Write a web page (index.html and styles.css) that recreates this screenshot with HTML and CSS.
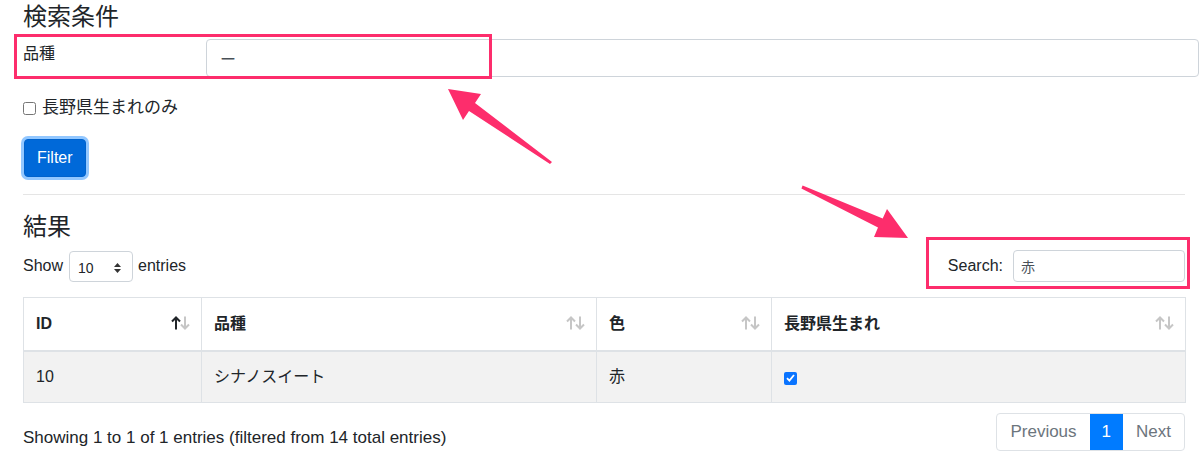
FILE: index.html
```html
<!DOCTYPE html>
<html lang="ja">
<head>
    <meta charset="UTF-8">
    <meta name="viewport" content="width=device-width, initial-scale=1.0">
    <link rel="stylesheet" href="styles.css">
    <title>検索</title>
</head>
<body>
    <div class="page">
        <h3 class="section-title">検索条件</h3>

        <form class="filter-form">
            <div class="form-row">
                <label class="row-label" for="kind">品種</label>
                <input class="text-input" id="kind" type="text" value="ー">
            </div>
            <label class="check-row">
                <input type="checkbox" class="check-box">
                <span>長野県生まれのみ</span>
            </label>
            <button type="button" class="btn-filter">Filter</button>
        </form>

        <hr class="divider">

        <h3 class="section-title result-title">結果</h3>

        <div class="table-controls">
            <div class="length-ctl">
                <span>Show</span>
                <div class="fake-select">
                    <span>10</span>
                    <svg width="9" height="12" viewBox="0 0 9 12"><path d="M4.5 1 L8 5 H1 Z M4.5 11 L8 7 H1 Z" fill="#333"/></svg>
                </div>
                <span>entries</span>
            </div>
            <div class="search-ctl">
                <span>Search:</span>
                <input class="search-input" type="text" value="赤">
            </div>
        </div>

        <table class="result-table">
            <colgroup>
                <col style="width: 178px">
                <col style="width: 395px">
                <col style="width: 175px">
                <col style="width: 414px">
            </colgroup>
            <thead>
                <tr>
                    <th><div class="th-inner"><span>ID</span>
                        <svg class="sort" width="19" height="14" viewBox="0 0 19 14"><path d="M5 13.5 V1.5 M1 5.5 L5 1.5 L9 5.5" class="up on"/><path d="M14 0.5 V12.5 M10 8.5 L14 12.5 L18 8.5" class="down"/></svg>
                    </div></th>
                    <th><div class="th-inner"><span>品種</span>
                        <svg class="sort" width="19" height="14" viewBox="0 0 19 14"><path d="M5 13.5 V1.5 M1 5.5 L5 1.5 L9 5.5" class="up"/><path d="M14 0.5 V12.5 M10 8.5 L14 12.5 L18 8.5" class="down"/></svg>
                    </div></th>
                    <th><div class="th-inner"><span>色</span>
                        <svg class="sort" width="19" height="14" viewBox="0 0 19 14"><path d="M5 13.5 V1.5 M1 5.5 L5 1.5 L9 5.5" class="up"/><path d="M14 0.5 V12.5 M10 8.5 L14 12.5 L18 8.5" class="down"/></svg>
                    </div></th>
                    <th><div class="th-inner"><span>長野県生まれ</span>
                        <svg class="sort" width="19" height="14" viewBox="0 0 19 14"><path d="M5 13.5 V1.5 M1 5.5 L5 1.5 L9 5.5" class="up"/><path d="M14 0.5 V12.5 M10 8.5 L14 12.5 L18 8.5" class="down"/></svg>
                    </div></th>
                </tr>
            </thead>
            <tbody>
                <tr>
                    <td>10</td>
                    <td>シナノスイート</td>
                    <td>赤</td>
                    <td><span class="tick"><svg width="9" height="8" viewBox="0 0 9 8"><path d="M1 4.2 L3.4 6.6 L8 1" fill="none" stroke="#fff" stroke-width="1.8"/></svg></span></td>
                </tr>
            </tbody>
        </table>

        <div class="table-footer">
            <div class="info">Showing 1 to 1 of 1 entries (filtered from 14 total entries)</div>
            <div class="pager">
                <a class="page-link">Previous</a>
                <a class="page-link active">1</a>
                <a class="page-link">Next</a>
            </div>
        </div>
    </div>

    <!-- annotation marks drawn over the screenshot -->
    <svg class="annotations" width="1200" height="469" viewBox="0 0 1200 469">
        <rect x="15.5" y="35.5" width="475" height="42" fill="none" stroke="#fd2d6c" stroke-width="3"/>
        <rect x="927.5" y="238.5" width="261" height="49" fill="none" stroke="#fd2d6c" stroke-width="3"/>
        <polygon points="448,89 481,94 475,103 552,162 550,164 469,111 463,120" fill="#fd2d6c"/>
        <polygon points="908,238 874,237 878,227.5 801.4,188.4 802.6,185.6 882.7,218.5 887,209" fill="#fd2d6c"/>
    </svg>
</body>
</html>
```

FILE: styles.css
```css
body {
    margin: 0;
    font-family: "Liberation Sans", "Noto Sans CJK JP", sans-serif;
    font-size: 16px;
    color: #212529;
    background-color: #fff;
}

.page {
    padding: 0 15px 0 23px;
}

.section-title {
    margin: 0;
    font-size: 24px;
    font-weight: normal;
    line-height: 34px;
}

.filter-form {
    display: flex;
    flex-direction: column;
    align-items: flex-start;
}

.form-row {
    display: flex;
    align-items: flex-start;
    margin-top: 5px;
    margin-right: -14px;
    align-self: stretch;
}

.row-label {
    width: 183px;
    padding-top: 3px;
    line-height: 24px;
}

.text-input {
    flex: 1;
    height: 38px;
    box-sizing: border-box;
    border: 1px solid #ced4da;
    border-radius: 4px;
    padding: 0 13px;
    font: inherit;
    color: #495057;
}

.check-row {
    display: flex;
    align-items: center;
    gap: 6px;
    margin-top: 19px;
    line-height: 24px;
    font-size: 17px;
}

.check-box {
    margin: 0;
    width: 13px;
    height: 13px;
}

.btn-filter {
    margin: 19px 0 0 1px;
    height: 38px;
    padding: 0 12px;
    font: inherit;
    color: #fff;
    background-color: #0069d9;
    border: 1px solid #0062cc;
    border-radius: 4px;
    box-shadow: 0 0 0 3px rgba(38, 143, 255, 0.5);
}

.divider {
    margin: 17px 0 0;
    border: 0;
    border-top: 1px solid #e5e5e5;
}

.result-title {
    margin-top: 15px;
}

.table-controls {
    display: flex;
    justify-content: space-between;
    align-items: center;
    margin-top: 6px;
    height: 32px;
}

.length-ctl,
.search-ctl {
    display: flex;
    align-items: center;
}

.fake-select {
    display: flex;
    align-items: center;
    justify-content: space-between;
    box-sizing: border-box;
    width: 64px;
    height: 31px;
    margin: 1px 5px 0 6px;
    padding: 2px 10px 0 8px;
    border: 1px solid #ced4da;
    border-radius: 4px;
    font-size: 14px;
}

.search-ctl span {
    margin-right: 10px;
}

.search-input {
    width: 172px;
    height: 32px;
    box-sizing: border-box;
    border: 1px solid #ced4da;
    border-radius: 4px;
    padding: 0 7px;
    font: inherit;
    font-size: 14px;
    color: #495057;
}

.result-table {
    width: 100%;
    margin-top: 15px;
    border-collapse: collapse;
    table-layout: fixed;
}

.result-table th,
.result-table td {
    border: 1px solid #dee2e6;
    text-align: left;
    line-height: 24px;
}

.result-table th {
    padding: 14px 10px 14px 12px;
    border-bottom: 2px solid #dee2e6;
    font-weight: bold;
}

.result-table td {
    padding: 13px 12px;
    background-color: #f2f2f2;
}

.th-inner {
    display: flex;
    justify-content: space-between;
    align-items: center;
}

.sort {
    margin-right: 1px;
    margin-top: -2px;
}

.sort path {
    fill: none;
    stroke: #c6c6c6;
    stroke-width: 2;
}

.sort path.on {
    stroke: #212529;
}

.tick {
    display: inline-flex;
    align-items: center;
    justify-content: center;
    width: 13px;
    height: 13px;
    border-radius: 2px;
    background-color: #0a74ff;
    vertical-align: 0;
}

.table-footer {
    display: flex;
    justify-content: space-between;
    align-items: flex-start;
    margin-top: 10px;
    font-size: 17px;
}

.info {
    padding-top: 15px;
}

.pager {
    display: flex;
    border: 1px solid #dee2e6;
    border-radius: 4px;
    overflow: hidden;
}

.page-link {
    height: 36px;
    line-height: 36px;
    padding: 0 13px;
    color: #6c757d;
}

.page-link.active {
    padding: 0 12px;
    color: #fff;
    background-color: #007bff;
}

.annotations {
    position: absolute;
    top: 0;
    left: 0;
    pointer-events: none;
}
```
